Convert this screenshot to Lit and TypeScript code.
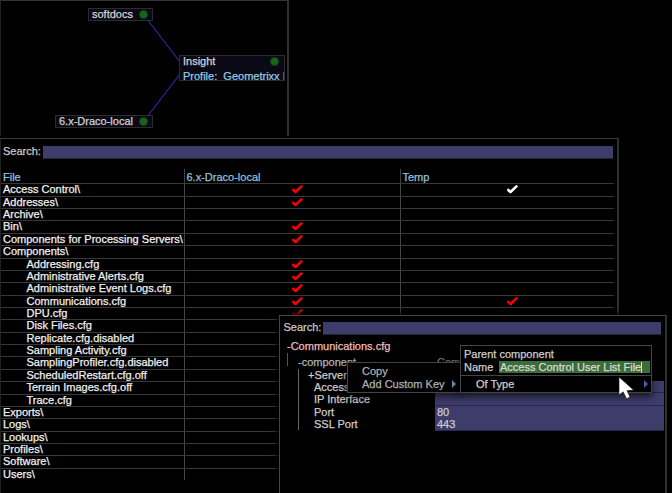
import { LitElement, html, css, svg } from "lit";
import { customElement, property } from "lit/decorators.js";

const check = (color: string) => html`<svg class="check" viewBox="0 0 11 9" width="11" height="9">
  <path d="M1.2 5 L3.5 7 L9.4 1.4" fill="none" stroke=${color} stroke-width="2.6" stroke-linejoin="round" stroke-linecap="round"/></svg>`;

interface Row { name: string; child?: boolean; draco?: boolean; temp?: string }

const ROWS: Row[] = [
  { name: "Access Control\\", draco: true, temp: "#fff" },
  { name: "Addresses\\", draco: true },
  { name: "Archive\\" },
  { name: "Bin\\", draco: true },
  { name: "Components for Processing Servers\\", draco: true },
  { name: "Components\\" },
  { name: "Addressing.cfg", child: true, draco: true },
  { name: "Administrative Alerts.cfg", child: true, draco: true },
  { name: "Administrative Event Logs.cfg", child: true, draco: true },
  { name: "Communications.cfg", child: true, draco: true, temp: "#f80000" },
  { name: "DPU.cfg", child: true, draco: true },
  { name: "Disk Files.cfg", child: true },
  { name: "Replicate.cfg.disabled", child: true },
  { name: "Sampling Activity.cfg", child: true },
  { name: "SamplingProfiler.cfg.disabled", child: true },
  { name: "ScheduledRestart.cfg.off", child: true },
  { name: "Terrain Images.cfg.off", child: true },
  { name: "Trace.cfg", child: true },
  { name: "Exports\\" },
  { name: "Logs\\" },
  { name: "Lookups\\" },
  { name: "Profiles\\" },
  { name: "Software\\" },
  { name: "Users\\" },
];

@customElement("search-bar")
export class SearchBar extends LitElement {
  static styles = css`
    :host { display: flex; height: 13px; }
    .label { width: 39.5px; line-height: 11px; color: #c8c8c8; white-space: nowrap; }
    .field { flex: 1; background: #3e3c6b; border-bottom: 1px solid #24233f; box-sizing: border-box; }
  `;
  render() {
    return html`<span class="label">Search:</span><div class="field"></div>`;
  }
}

@customElement("network-map")
export class NetworkMap extends LitElement {
  static styles = css`
    :host { position: relative; display: block; width: 289px; height: 136px; box-sizing: border-box;
      border-top: 1px solid #333; border-left: 1px solid #222; border-right: 2px solid #303030; }
    .links { position: absolute; left: -1px; top: -1px; }
    .node { position: absolute; box-sizing: border-box; background: #0a0a17; border: 1px solid #2c2c30;
      color: #d2d2d2; white-space: nowrap; overflow: hidden; padding-left: 3px; }
    .softdocs { left: 87px; top: 7px; width: 65px; height: 13px; }
    .draco { left: 54px; top: 114px; width: 98px; height: 13px; }
    .insight { left: 178px; top: 54px; width: 106px; height: 26px; }
    .softdocs, .draco { line-height: 10px; }
    .insight { line-height: 10px; }
    .profile { color: #94c8e4; line-height: 20px; white-space: pre; }
    .dot { position: absolute; right: 4px; top: 1px; width: 9px; height: 9px; box-sizing: border-box;
      border-radius: 50%; background: #1c641c; border: 1px solid #104410; }
    .insight .dot { right: 5px; }
  `;
  render() {
    return html`
      <svg class="links" width="288" height="136">
        ${svg`<path d="M147 19 L180 62 M147 117 L180 74" fill="none" stroke="#2d2bb0" stroke-width="1.1"/>`}
      </svg>
      <div class="node softdocs">softdocs<i class="dot"></i></div>
      <div class="node draco">6.x-Draco-local<i class="dot"></i></div>
      <div class="node insight">Insight<div class="profile">Profile:  Geometrixx I</div><i class="dot"></i></div>
    `;
  }
}

@customElement("file-table")
export class FileTable extends LitElement {
  static styles = css`
    :host { display: flex; flex-direction: column; box-sizing: border-box; width: 619px; height: 355px;
      border-top: 1px solid #3a3a3a; border-right: 2px solid #303030; border-left: 1px solid #222;
      background: #000; padding-top: 7px; }
    search-bar { margin: 0 4px 0 2px; }
    .table { margin-top: 10px; width: 613px; }
    .row { display: grid; grid-template-columns: 183px 216px 1fr; height: 12.37px; }
    .cell { box-sizing: border-box; border-top: 1px solid #383838; padding-left: 2px; line-height: 10.6px;
      white-space: nowrap; color: #f0f0f0; }
    .cell + .cell { border-left: 1px solid #444; }
    .head { height: 14.4px; }
    .head .cell { border-top: none; color: #90c0de; line-height: 16px; }
    .head .cell + .cell { padding-left: 1.5px; }
    .cell.child { padding-left: 25.5px; }
    .mark { display: flex; justify-content: center; }
    .cell.mark { padding: 1px 0 0 9px; }
    .check { display: block; }
  `;
  render() {
    return html`
      <search-bar></search-bar>
      <div class="table">
        <div class="row head"><div class="cell">File</div><div class="cell">6.x-Draco-local</div><div class="cell">Temp</div></div>
        ${ROWS.map(r => html`<div class="row">
          <div class="cell ${r.child ? "child" : ""}">${r.name}</div>
          <div class="cell mark">${r.draco ? check("#f80000") : ""}</div>
          <div class="cell mark">${r.temp ? check(r.temp) : ""}</div>
        </div>`)}
      </div>`;
  }
}

@customElement("config-window")
export class ConfigWindow extends LitElement {
  static styles = css`
    :host { display: flex; flex-direction: column; box-sizing: border-box; width: 388px; height: 178px;
      border: 1px solid #444; border-right: 2px solid #303030; border-bottom: none; background: #000;
      box-shadow: 0 0 5px 2px #000; padding-top: 6px; color: #ccc; }
    search-bar { margin: 0 4px 0 3.5px; }
    .title { margin: 5px 0 0 7px; line-height: 12px; }
    .title b { font-weight: normal; color: #f0bcbc; }
    .tree { margin-left: 7px; border-left: 1px solid #555; height: 13px; margin-top: 1px; }
    .comp { display: grid; grid-template-columns: 139px 1fr; padding-left: 10px; line-height: 18px; }
    .rows { margin-left: 18px; margin-right: 1px; border-left: 1px solid #666; margin-top: 2.5px; }
    .row { display: grid; grid-template-columns: 136px 1fr; height: 12.35px; line-height: 12px; }
    .key { padding-left: 15px; white-space: nowrap; }
    .key.server { padding-left: 9px; }
    .value { background: #3e3c6b; border-bottom: 1px solid #292849; box-sizing: border-box; padding-left: 2px; }
    .dim { color: #777; }
    .gray { color: #b4b4b4; }
  `;
  render() {
    const rows = [["Access Control", ""], ["IP Interface", ""], ["Port", "80"], ["SSL Port", "443"]];
    return html`
      <search-bar></search-bar>
      <div class="title">-<b>Communications.cfg</b></div>
      <div class="tree"><div class="comp"><span class="gray">-component</span><span class="dim">Component</span></div></div>
      <div class="rows">
        <div class="row"><span class="key server">+Servers</span></div>
        ${rows.map(([k, v]) => html`<div class="row"><span class="key">${k}</span><span class="value">${v}</span></div>`)}
      </div>`;
  }
}

@customElement("context-menu")
export class ContextMenu extends LitElement {
  @property() kind = "main";
  static styles = css`
    :host { display: block; box-sizing: border-box; background: #000; border: 1px solid #444;
      box-shadow: 0 3px 7px 1px rgba(0, 0, 0, 0.6); color: #ccc; white-space: nowrap; }
    .main { padding: 2px 4px 0 14px; color: #b0b0b0; line-height: 12.5px; }
    .item { display: flex; justify-content: space-between; align-items: center; }
    .arrow { width: 0; height: 0; border: 4px solid transparent; border-left: 4.5px solid #5c8cb4; border-right: none; }
    .sub { line-height: 12.5px; padding-top: 2px; }
    .line { padding-left: 3px; display: flex; }
    .name { width: 34.5px; }
    .input { flex: 1; background: #3c6c3a; color: #d8dcd4; padding-left: 1.5px; height: 12px; line-height: 12px; margin-right: 1px; }
    .caret { display: inline-block; width: 1px; height: 11px; background: #ddd; vertical-align: top; margin-top: 1px; }
    .type { border-top: 1px solid #444; margin-top: 2px; padding: 2px 3px 0 15px; }
    .type .arrow { border-left-color: #5055b0; }
  `;
  render() {
    return this.kind === "main"
      ? html`<div class="main"><div>Copy</div><div class="item">Add Custom Key<i class="arrow"></i></div></div>`
      : html`<div class="sub">
          <div class="line">Parent component</div>
          <div class="line"><span class="name">Name</span><span class="input">Access Control User List File<i class="caret"></i></span></div>
          <div class="item type">Of Type<i class="arrow"></i></div>
        </div>`;
  }
}

@customElement("app-root")
export class AppRoot extends LitElement {
  static styles = css`
    :host { position: relative; display: block; width: 672px; height: 493px; overflow: hidden; background: #000;
      font: 11px "Liberation Sans", Arial, sans-serif; -webkit-text-stroke: 0.25px currentColor; }
    file-table { margin-top: 2px; }
    config-window { position: absolute; left: 279px; top: 315px; }
    .menu { position: absolute; left: 347px; top: 362px; width: 114px; height: 31px; }
    .submenu { position: absolute; left: 460px; top: 345px; width: 192px; height: 48px; }
    .cursor { position: absolute; left: 618px; top: 376px; }
  `;
  render() {
    return html`
      <network-map></network-map>
      <file-table></file-table>
      <config-window></config-window>
      <context-menu class="menu" kind="main"></context-menu>
      <context-menu class="submenu" kind="sub"></context-menu>
      <svg class="cursor" width="17" height="24" viewBox="0 0 17 24">
        <path d="M1 1 L1 19 L5.2 15.8 L8.5 22.8 L12 21 L9 14.8 L15.5 14 Z" fill="#fff" stroke="#111" stroke-width="0.6"/>
      </svg>`;
  }
}
